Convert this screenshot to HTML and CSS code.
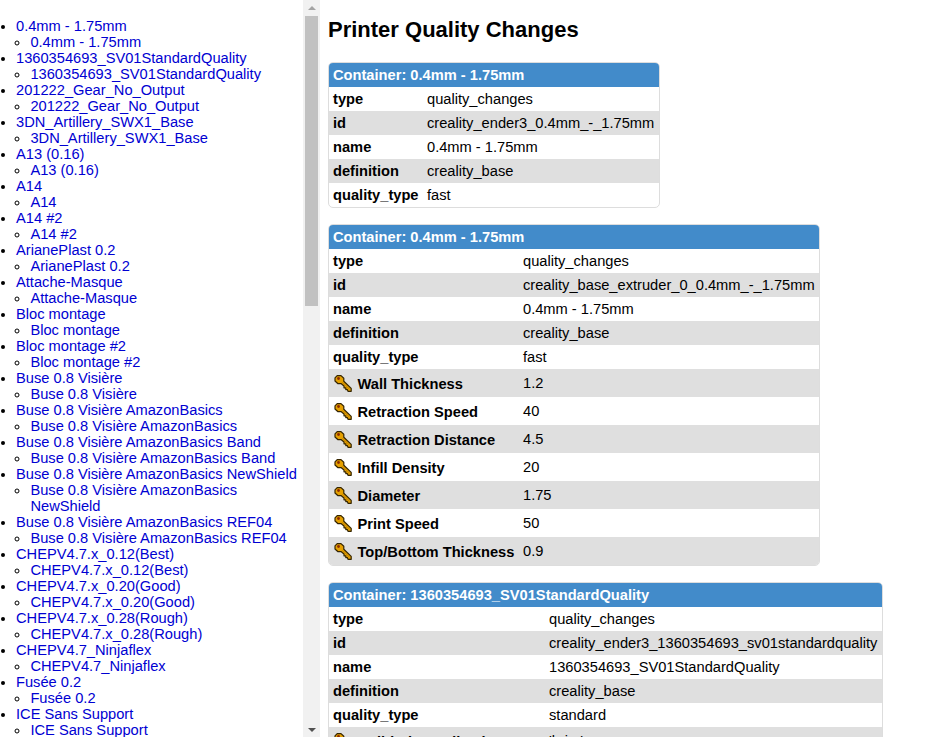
FILE: index.html
```
<!DOCTYPE html>
<html lang="en">
<head>
<meta charset="utf-8">
<title>Printer Quality Changes</title>
<link rel="stylesheet" href="styles.css">
</head>
<body>
<svg class="defs" width="0" height="0" aria-hidden="true">
  <symbol id="key" viewBox="0 0 20 20">
    <path d="M4.200 2.600H8L10.800 5.200V8.200L18.200 15.400V18.300H15L14.300 16.600H12.800V14.800H11V13L8.300 10.700H5L2 8V4.800Z" fill="#e5a000" stroke="#352500" stroke-width="1.200" stroke-linejoin="round"/>
    <path d="M9.500 9.200L16.500 16.200" stroke="#b87b00" stroke-width="0.800" fill="none"/>
    <circle cx="5.500" cy="5.500" r="1.400" fill="#8c2b00"/>
  </symbol>
</svg>
<div class="page">
  <nav class="sidebar">
    <ul class="toc" id="toc"></ul>
    <div class="scrollbar"><i class="up"></i><div class="thumb"></div><i class="down"></i></div>
  </nav>
  <main class="content" id="content">
    <h1>Printer Quality Changes</h1>
  </main>
</div>
<script src="app.js"></script>
</body>
</html>
```
FILE: styles.css
```
* { box-sizing: border-box; }
body {
  margin: 0;
  font: 14.667px/16px "Liberation Sans", Arial, sans-serif;
  color: #000;
  background: #fff;
}
.defs { position: absolute; }
.page { display: flex; height: 737px; overflow: hidden; }
.sidebar { display: flex; width: 320px; flex: none; overflow: hidden; }
.toc { flex: 1; margin: 0; padding: 18px 0 0 16px; list-style: disc; }
.toc ul { margin: 0; padding: 0 0 0 14.400px; list-style: circle; }
.toc a { color: #0000d2; text-decoration: none; }
.scrollbar {
  display: flex;
  flex-direction: column;
  align-items: center;
  width: 17px;
  height: 737px;
  padding: 6px 0 5px;
  background: #f1f1f1;
}
.scrollbar i { border: 4px solid transparent; }
.scrollbar .up { border-top: 0; border-bottom-color: #a3a3a3; }
.scrollbar .down { border-bottom: 0; border-top-color: #505050; }
.thumb { width: 13px; height: 290px; margin: 6px 0 auto; background: #c1c1c1; }
.content { flex: 1; min-width: 0; padding: 17px 0 0 8px; }
h1 { margin: 0 0 20px; font-size: 22px; line-height: 25px; }
.card {
  margin-bottom: 16px;
  border: 1px solid #ddd;
  border-radius: 5px;
  overflow: hidden;
}
.small { width: 332px; }
.medium { width: 492px; }
.large { width: 555px; }
table { width: 100%; table-layout: fixed; border-collapse: collapse; }
th, td { height: 24px; padding: 4px; text-align: left; white-space: nowrap; }
thead th { background: #428bca; color: #fff; }
.small .label { width: 94px; }
.medium .label { width: 190px; }
.large .label { width: 216px; }
tbody tr:nth-child(even) { background: #dfdfdf; }
.setting th, .setting td { height: 28px; }
.name { display: flex; gap: 4.500px; height: 20px; line-height: 22px; }
.name svg { width: 20px; height: 20px; flex: none; }
```
FILE: app.js
```
const profiles = [
  "0.4mm - 1.75mm", "1360354693_SV01StandardQuality", "201222_Gear_No_Output",
  "3DN_Artillery_SWX1_Base", "A13 (0.16)", "A14", "A14 #2", "ArianePlast 0.2",
  "Attache-Masque", "Bloc montage", "Bloc montage #2", "Buse 0.8 Visière",
  "Buse 0.8 Visière AmazonBasics", "Buse 0.8 Visière AmazonBasics Band",
  "Buse 0.8 Visière AmazonBasics NewShield", "Buse 0.8 Visière AmazonBasics REF04",
  "CHEPV4.7.x_0.12(Best)", "CHEPV4.7.x_0.20(Good)", "CHEPV4.7.x_0.28(Rough)",
  "CHEPV4.7_Ninjaflex", "Fusée 0.2", "ICE Sans Support"
];
document.getElementById("toc").innerHTML = profiles.map(p =>
  `<li><a href="#">${p}</a><ul><li><a href="#">${p}</a></li></ul></li>`).join("");

const containers = [
  { size: "small", title: "0.4mm - 1.75mm", id: "creality_ender3_0.4mm_-_1.75mm", type: "fast", settings: [] },
  { size: "medium", title: "0.4mm - 1.75mm", id: "creality_base_extruder_0_0.4mm_-_1.75mm", type: "fast",
    settings: [["Wall Thickness", "1.2"], ["Retraction Speed", "40"], ["Retraction Distance", "4.5"],
      ["Infill Density", "20"], ["Diameter", "1.75"], ["Print Speed", "50"], ["Top/Bottom Thickness", "0.9"]] },
  { size: "large", title: "1360354693_SV01StandardQuality", id: "creality_ender3_1360354693_sv01standardquality",
    type: "standard", settings: [["Build Plate Adhesion Type", "'brim'"]] }
];
const row = (k, v) => `<tr><th>${k}</th><td>${v}</td></tr>`;
const setting = ([k, v]) =>
  `<tr class="setting"><th><div class="name"><svg><use href="#key"/></svg>${k}</div></th><td>${v}</td></tr>`;
document.getElementById("content").insertAdjacentHTML("beforeend", containers.map(c => `
  <section class="card ${c.size}"><table>
    <colgroup><col class="label"><col></colgroup>
    <thead><tr><th colspan="2">Container: ${c.title}</th></tr></thead>
    <tbody>${row("type", "quality_changes")}${row("id", c.id)}${row("name", c.title)}
    ${row("definition", "creality_base")}${row("quality_type", c.type)}${c.settings.map(setting).join("")}</tbody>
  </table></section>`).join(""));
```
